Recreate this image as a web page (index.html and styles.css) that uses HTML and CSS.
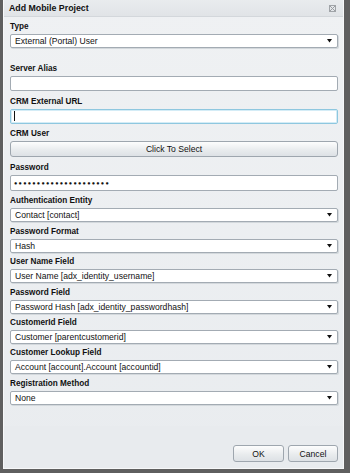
FILE: index.html
```html
<!DOCTYPE html>
<html>
<head>
<meta charset="utf-8">
<link rel="stylesheet" href="styles.css">
</head>
<body>
<div class="dialog">
  <div class="titlebar">
    <span class="title">Add Mobile Project</span>
    <svg class="close" width="7" height="7" viewBox="0 0 7 7"><rect x="0.5" y="0.5" width="6" height="6" fill="none" stroke="#a0a4a8"/><path d="M1 1L6 6M6 1L1 6" stroke="#9a9ea2" stroke-width="1"/></svg>
  </div>
  <div class="content">
    <div class="field sel">
      <div class="label">Type</div>
      <div class="select"><span>External (Portal) User</span><svg class="arrow" width="5" height="4" viewBox="0 0 5 4"><path d="M0 0H5L2.5 3.5Z" fill="#111"/></svg></div>
    </div>
    <div class="spacer"></div>
    <div class="field inp">
      <div class="label">Server Alias</div>
      <div class="input"></div>
    </div>
    <div class="field inp">
      <div class="label">CRM External URL</div>
      <div class="input focus"><span class="caret"></span></div>
    </div>
    <div class="field inp">
      <div class="label">CRM User</div>
      <div class="button wide">Click To Select</div>
    </div>
    <div class="field inp">
      <div class="label">Password</div>
      <div class="input pw">●●●●●●●●●●●●●●●●●●●●●</div>
    </div>
    <div class="field sel">
      <div class="label">Authentication Entity</div>
      <div class="select"><span>Contact [contact]</span><svg class="arrow" width="5" height="4" viewBox="0 0 5 4"><path d="M0 0H5L2.5 3.5Z" fill="#111"/></svg></div>
    </div>
    <div class="field sel">
      <div class="label">Password Format</div>
      <div class="select"><span>Hash</span><svg class="arrow" width="5" height="4" viewBox="0 0 5 4"><path d="M0 0H5L2.5 3.5Z" fill="#111"/></svg></div>
    </div>
    <div class="field sel">
      <div class="label">User Name Field</div>
      <div class="select"><span>User Name [adx_identity_username]</span><svg class="arrow" width="5" height="4" viewBox="0 0 5 4"><path d="M0 0H5L2.5 3.5Z" fill="#111"/></svg></div>
    </div>
    <div class="field sel">
      <div class="label">Password Field</div>
      <div class="select"><span>Password Hash [adx_identity_passwordhash]</span><svg class="arrow" width="5" height="4" viewBox="0 0 5 4"><path d="M0 0H5L2.5 3.5Z" fill="#111"/></svg></div>
    </div>
    <div class="field sel">
      <div class="label">CustomerId Field</div>
      <div class="select"><span>Customer [parentcustomerid]</span><svg class="arrow" width="5" height="4" viewBox="0 0 5 4"><path d="M0 0H5L2.5 3.5Z" fill="#111"/></svg></div>
    </div>
    <div class="field sel">
      <div class="label">Customer Lookup Field</div>
      <div class="select"><span>Account [account].Account [accountid]</span><svg class="arrow" width="5" height="4" viewBox="0 0 5 4"><path d="M0 0H5L2.5 3.5Z" fill="#111"/></svg></div>
    </div>
    <div class="field sel">
      <div class="label">Registration Method</div>
      <div class="select"><span>None</span><svg class="arrow" width="5" height="4" viewBox="0 0 5 4"><path d="M0 0H5L2.5 3.5Z" fill="#111"/></svg></div>
    </div>
  </div>
  <div class="footer">
    <div class="button ok">OK</div>
    <div class="button cancel">Cancel</div>
  </div>
</div>
</body>
</html>
```
FILE: styles.css
```css
html, body {
  margin: 0;
  padding: 0;
}
body {
  width: 350px;
  height: 473px;
  background: #5f5f5f;
  font-family: "Liberation Sans", Arial, sans-serif;
  color: #1a1a1a;
  overflow: hidden;
}
.dialog {
  margin-left: 3px;
  width: 341px;
  height: 469px;
  box-sizing: border-box;
  border: 1px solid #f7f8f9;
  border-top: none;
  background: linear-gradient(#eff1f3, #e9ecef);
  display: flex;
  flex-direction: column;
}
.titlebar {
  height: 16px;
  flex: none;
  background: linear-gradient(#e9ecee, #e1e4e7);
  border-bottom: 1px solid #d3d7db;
  display: flex;
  align-items: center;
  justify-content: space-between;
  padding: 0 7px 0 5px;
}
.title {
  font-weight: bold;
  font-size: 8.8px;
  color: #111;
}
.close {
  display: block;
}
.content {
  flex: 1;
  padding: 5px 5px 0 6px;
}
.field.sel {
  margin-bottom: 4.4px;
}
.field.inp {
  margin-bottom: 5.5px;
}
.spacer {
  height: 12px;
}
.label {
  font-weight: bold;
  font-size: 8.2px;
  line-height: 10px;
  height: 10px;
  margin-bottom: 2px;
  color: #111;
}
.select {
  height: 14px;
  box-sizing: border-box;
  background: #fff;
  border: 1px solid #a3abb3;
  border-radius: 2px;
  display: flex;
  align-items: center;
  justify-content: space-between;
  padding: 0 5px 0 4px;
  font-size: 8.6px;
  color: #111;
  box-shadow: 1px 1px 0 #d3d8dc;
}
.arrow {
  display: block;
}
.input {
  height: 15px;
  box-sizing: border-box;
  background: #fff;
  border: 1px solid #a3abb3;
  border-radius: 2px;
  display: flex;
  align-items: center;
  padding: 0 3px;
}
.input.focus {
  border-color: #8ec7df;
  box-shadow: inset 0 0 0 1px #d4ecf6;
}
.caret {
  display: block;
  width: 1px;
  height: 10px;
  background: #111;
}
.input.pw {
  height: 16px;
  font-size: 5.5px;
  letter-spacing: 1.25px;
  color: #111;
}
.button {
  box-sizing: border-box;
  background: linear-gradient(#fdfdfd, #e9ecee 55%, #dde1e5);
  border: 1px solid #9ea6ae;
  border-radius: 3px;
  display: flex;
  align-items: center;
  justify-content: center;
  font-size: 8.6px;
  color: #111;
}
.button.wide {
  height: 16px;
}
.footer {
  height: 42px;
  flex: none;
  display: flex;
  justify-content: flex-end;
  align-items: flex-start;
  gap: 4px;
  padding: 19px 5px 0 0;
  box-sizing: border-box;
  background: #e8ebee;
}
.button.ok {
  width: 51px;
  height: 17px;
}
.button.cancel {
  width: 50px;
  height: 17px;
}
```
